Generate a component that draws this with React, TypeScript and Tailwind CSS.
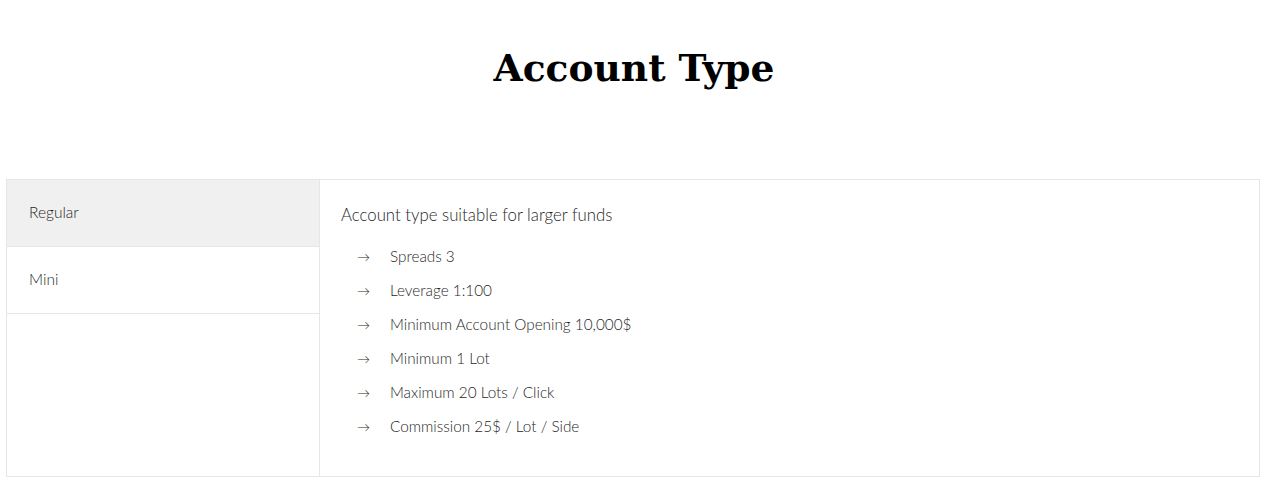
import React, { useState } from "react";

const accounts = {
  Regular: {
    intro: "Account type suitable for larger funds",
    items: [
      "Spreads 3",
      "Leverage 1:100",
      "Minimum Account Opening 10,000$",
      "Minimum 1 Lot",
      "Maximum 20 Lots / Click",
      "Commission 25$ / Lot / Side",
    ],
  },
  Mini: {
    intro: "Account type suitable for smaller funds",
    items: ["Spreads 3", "Leverage 1:100", "Minimum Account Opening 1,000$", "Minimum 0.1 Lot"],
  },
};

type TabKey = keyof typeof accounts;

export default function App() {
  const [tab, setTab] = useState<TabKey>("Regular");
  const current = accounts[tab];

  return (
    <div className="min-h-screen bg-white font-['Lato','Liberation_Sans',sans-serif] text-[#1f1f1f]">
      <h1 className="pt-[41px] text-center font-['DejaVu_Serif',serif] text-[37.6px] font-bold leading-[54px] text-black">
        Account Type
      </h1>

      <div className="ml-[6px] mr-[8px] mt-[84px] flex border border-[#e6e6e6]">
        {/* tabs */}
        <div className="flex w-[313px] flex-col border-r border-[#e6e6e6]">
          {(Object.keys(accounts) as TabKey[]).map((k) => (
            <button
              key={k}
              onClick={() => setTab(k)}
              className={
                "h-[67px] border-b border-[#e6e6e6] pl-[22px] text-left text-[15.5px] font-light " +
                (tab === k ? "bg-[#f0f0f0]" : "bg-white")
              }
            >
              {k}
            </button>
          ))}
        </div>

        {/* content */}
        <div className="flex-1 px-[21px] pt-[23px] pb-[33px]">
          <p className="text-[16.8px] font-light leading-[24px]">{current.intro}</p>
          <ul className="mt-[12px] flex flex-col">
            {current.items.map((it) => (
              <li key={it} className="flex h-[34px] items-center text-[15.3px] font-light">
                <span className="ml-[16px] w-[33px] pt-[4px] text-[13px]">→</span>
                <span>{it}</span>
              </li>
            ))}
          </ul>
        </div>
      </div>
    </div>
  );
}
